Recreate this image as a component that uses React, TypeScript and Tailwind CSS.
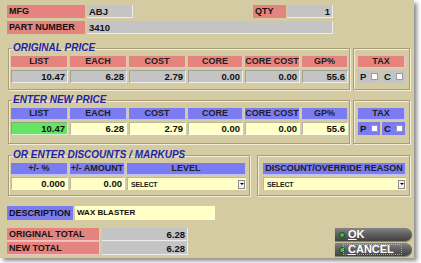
import React from "react";

const PINK = "bg-[#e5847f]";

function HeadCell({ w, bg, children }: { w: string; bg: string; children: React.ReactNode }) {
  return (
    <div className={`${w} ${bg} h-[12px] flex items-center justify-center text-[9px] font-bold leading-none text-[#202020] border-r border-b border-white/50`}>
      {children}
    </div>
  );
}

function ValCell({ w, bg, children }: { w: string; bg: string; children: React.ReactNode }) {
  return (
    <div className={`${w} ${bg} h-[13px] flex items-center justify-end pr-[2px] text-[9.5px] font-bold leading-none text-[#101010] border-r border-b border-white/70 border-t border-l border-t-[#8a8a8a]/60 border-l-[#8a8a8a]/60`}>
      {children}
    </div>
  );
}

function Check() {
  return <span className="inline-block w-[7px] h-[7px] bg-white border border-[#9a9a9a]" />;
}

function TaxRow({ bg }: { bg: string }) {
  return (
    <div className="flex gap-[2px]">
      <div className={`w-[22px] h-[13px] ${bg} flex items-center justify-between px-[2px] text-[9.5px] font-bold leading-none`}>
        <span>P</span>
        <Check />
      </div>
      <div className={`w-[23px] h-[13px] ${bg} flex items-center justify-between px-[2px] text-[9.5px] font-bold leading-none`}>
        <span>C</span>
        <Check />
      </div>
    </div>
  );
}

function Select({ w }: { w: string }) {
  return (
    <div className={`${w} h-[13px] bg-[#ffffc6] flex items-center justify-between pl-[3px] pr-[1px] border-t border-l border-[#8a8a8a]/60`}>
      <span className="text-[7px] font-bold leading-none text-[#202020] tracking-[-0.2px]">SELECT</span>
      <span className="w-[7px] h-[9px] bg-[#f4f4f4] border border-[#8a8a8a] flex items-center justify-center">
        <span className="block w-0 h-0 border-l-[2px] border-r-[2px] border-t-[2px] border-l-transparent border-r-transparent border-t-black" />
      </span>
    </div>
  );
}

const fieldset = "border border-[#a79d78] shadow-[inset_1px_1px_0_#f2edd6,1px_1px_0_#f2edd6]";
const legend = "ml-[1px] px-[1px] text-[10px] leading-[10px] h-[10px] font-bold italic text-[#2323a8]";

function PriceRow({ head, val, first }: { head: string; val: string; first: string }) {
  return (
    <div className="flex flex-col gap-[2px]">
      <div className="flex gap-[2px]">
        <HeadCell w="w-[57px]" bg={head}>LIST</HeadCell>
        <HeadCell w="w-[57px]" bg={head}>EACH</HeadCell>
        <HeadCell w="w-[57px]" bg={head}>COST</HeadCell>
        <HeadCell w="w-[55px]" bg={head}>CORE</HeadCell>
        <HeadCell w="w-[55px]" bg={head}>CORE COST</HeadCell>
        <HeadCell w="w-[46px]" bg={head}>GP%</HeadCell>
      </div>
      <div className="flex gap-[2px]">
        <ValCell w="w-[57px]" bg={first}>10.47</ValCell>
        <ValCell w="w-[57px]" bg={val}>6.28</ValCell>
        <ValCell w="w-[57px]" bg={val}>2.79</ValCell>
        <ValCell w="w-[55px]" bg={val}>0.00</ValCell>
        <ValCell w="w-[55px]" bg={val}>0.00</ValCell>
        <ValCell w="w-[46px]" bg={val}>55.6</ValCell>
      </div>
    </div>
  );
}

function Button({ label, focus }: { label: string; focus?: boolean }) {
  return (
    <div className="relative w-[77px] h-[13px] rounded-l-[4px] rounded-r-full bg-gradient-to-b from-[#858585] via-[#5e5e5e] to-[#424242] flex items-center pl-[4px] shadow-[0_1px_1px_rgba(0,0,0,0.4)]">
      <span className="w-[6px] h-[6px] rounded-full bg-[#3fbf3f] border border-[#1a4a1a] mr-[3px]" />
      <span className="text-[11px] font-bold leading-none text-white">
        <span className="underline">{label[0]}</span>
        {label.slice(1)}
      </span>
      {focus && <span className="absolute left-[8px] right-[10px] top-[1px] bottom-[1px] border border-dotted border-[#cfcfcf]/70" />}
    </div>
  );
}

export default function App() {
  return (
    <div className="w-[421px] h-[263px] bg-white font-['Liberation_Sans',Arial,sans-serif] text-[#111]">
      <div className="w-[414px] h-[258px] bg-[#d5cba3] shadow-[3px_3px_4px_rgba(0,0,0,0.45)] pt-[5px] pl-[7px] flex flex-col">
        {/* header rows */}
        <div className="flex items-center h-[13px]">
          <div className={`w-[78px] h-[13px] ${PINK} text-[9px] font-bold leading-[13px] pl-[2px]`}>MFG</div>
          <div className="ml-[2px] w-[46px] h-[13px] bg-[#c4c4c4] text-[9.5px] font-bold leading-[13px] pl-[2px] border-r border-b border-white/70">ABJ</div>
          <div className={`ml-[120px] w-[33px] h-[13px] ${PINK} text-[9px] font-bold leading-[13px] pl-[2px]`}>QTY</div>
          <div className="ml-[1px] w-[46px] h-[13px] bg-[#c4c4c4] text-[9.5px] font-bold leading-[13px] pr-[2px] text-right border-r border-b border-white/70">1</div>
        </div>
        <div className="flex items-center h-[13px] mt-[3px]">
          <div className={`w-[78px] h-[13px] ${PINK} text-[9px] font-bold leading-[13px] pl-[2px]`}>PART NUMBER</div>
          <div className="ml-[2px] w-[246px] h-[13px] bg-[#c4c4c4] text-[9.5px] font-bold leading-[13px] pl-[2px] border-r border-b border-white/70">3410</div>
        </div>

        {/* original price */}
        <div className="flex items-start mt-[9px] ml-[1px]">
          <fieldset className={`${fieldset} pl-[2px] pr-[1px] pt-[3px] pb-[6px]`}>
            <legend className={legend}>ORIGINAL PRICE</legend>
            <PriceRow head="bg-[#e5847f]" val="bg-[#c4c4c4]" first="bg-[#c4c4c4]" />
          </fieldset>
          <fieldset className={`${fieldset} ml-[3px] mt-[5px] pl-[4px] pr-[4px] pt-[7px] pb-[6px]`}>
            <div className="flex flex-col gap-[2px]">
              <HeadCell w="w-[47px]" bg="bg-[#e5847f]">TAX</HeadCell>
              <TaxRow bg="bg-[#c4c4c4]" />
            </div>
          </fieldset>
        </div>

        {/* new price */}
        <div className="flex items-start mt-[5px] ml-[1px]">
          <fieldset className={`${fieldset} pl-[2px] pr-[1px] pt-[3px] pb-[8px]`}>
            <legend className={legend}>ENTER NEW PRICE</legend>
            <PriceRow head="bg-[#7c7cf2]" val="bg-[#ffffc6]" first="bg-[#66e466]" />
          </fieldset>
          <fieldset className={`${fieldset} ml-[3px] mt-[5px] pl-[4px] pr-[4px] pt-[7px] pb-[8px]`}>
            <div className="flex flex-col gap-[2px]">
              <HeadCell w="w-[47px]" bg="bg-[#7c7cf2]">TAX</HeadCell>
              <TaxRow bg="bg-[#7c7cf2]" />
            </div>
          </fieldset>
        </div>

        {/* discounts */}
        <div className="flex items-start mt-[6px] ml-[1px]">
          <fieldset className={`${fieldset} pl-[2px] pr-[3px] pt-[3px] pb-[5px]`}>
            <legend className={legend}>OR ENTER DISCOUNTS / MARKUPS</legend>
            <div className="flex flex-col gap-[2px]">
              <div className="flex gap-[2px]">
                <HeadCell w="w-[57px]" bg="bg-[#7c7cf2]">+/- %</HeadCell>
                <HeadCell w="w-[55px]" bg="bg-[#7c7cf2]">+/- AMOUNT</HeadCell>
                <HeadCell w="w-[119px]" bg="bg-[#7c7cf2]">LEVEL</HeadCell>
              </div>
              <div className="flex gap-[2px]">
                <ValCell w="w-[57px]" bg="bg-[#ffffc6]">0.000</ValCell>
                <ValCell w="w-[55px]" bg="bg-[#ffffc6]">0.00</ValCell>
                <Select w="w-[119px]" />
              </div>
            </div>
          </fieldset>
          <fieldset className={`${fieldset} ml-[7px] mt-[5px] pl-[5px] pr-[3px] pt-[7px] pb-[5px]`}>
            <div className="flex flex-col gap-[2px]">
              <HeadCell w="w-[143px]" bg="bg-[#7c7cf2]">DISCOUNT/OVERRIDE REASON</HeadCell>
              <Select w="w-[143px]" />
            </div>
          </fieldset>
        </div>

        {/* bottom */}
        <div className="flex justify-between items-start mt-[10px]">
          <div className="flex flex-col">
            <div className="flex h-[14px]">
              <div className="w-[66px] h-[14px] bg-[#7c7cf2] text-[9px] font-bold leading-[14px] pl-[2px] text-[#101010]">DESCRIPTION</div>
              <div className="ml-[2px] w-[140px] h-[14px] bg-[#ffffc6] text-[8px] font-bold leading-[14px] pl-[2px]">WAX BLASTER</div>
            </div>
            <div className="flex h-[13px] mt-[8px]">
              <div className={`w-[93px] h-[13px] ${PINK} text-[9px] font-bold leading-[13px] pl-[2px] border-r border-b border-white/50`}>ORIGINAL TOTAL</div>
              <div className="ml-[2px] w-[86px] h-[13px] bg-[#c4c4c4] text-[9.5px] font-bold leading-[13px] pr-[2px] text-right border-r border-b border-white/70">6.28</div>
            </div>
            <div className="flex h-[13px] mt-[1px]">
              <div className={`w-[93px] h-[13px] ${PINK} text-[9px] font-bold leading-[13px] pl-[2px] border-r border-b border-white/50`}>NEW TOTAL</div>
              <div className="ml-[2px] w-[86px] h-[13px] bg-[#c4c4c4] text-[9.5px] font-bold leading-[13px] pr-[2px] text-right border-r border-b border-white/70">6.28</div>
            </div>
          </div>
          <div className="flex flex-col gap-[2px] mr-[2px] mt-[22px]">
            <Button label="OK" />
            <Button label="CANCEL" focus />
          </div>
        </div>
      </div>
    </div>
  );
}
